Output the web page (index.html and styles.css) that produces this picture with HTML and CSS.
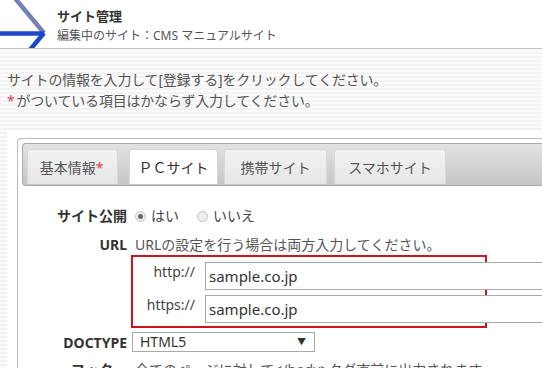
FILE: index.html
```html
<!DOCTYPE html>
<html lang="ja">
<head>
    <meta charset="UTF-8">
    <title>サイト管理</title>
    <link rel="stylesheet" href="styles.css">
</head>
<body>
    <div class="header">
        <svg class="logo" width="50" height="48" viewBox="0 0 50 48">
            <line x1="14" y1="-3" x2="44" y2="33" stroke="#7481b4" stroke-width="4.5"/>
            <line x1="0" y1="33.5" x2="44" y2="33.5" stroke="#1e46c8" stroke-width="4.5"/>
            <line x1="44" y1="33" x2="29" y2="51" stroke="#1e46c8" stroke-width="4.5"/>
        </svg>
        <div class="title-box">
            <div class="title">サイト管理</div>
            <div class="sub">編集中のサイト：CMS マニュアルサイト</div>
        </div>
    </div>

    <div class="intro">
        <p>サイトの情報を入力して[登録する]をクリックしてください。</p>
        <p><span class="req">*</span>がついている項目はかならず入力してください。</p>
    </div>

    <div class="wrap">
        <div class="panel">
            <div class="tabs">
                <div class="tab tab-basic">基本情報<span class="req">*</span></div>
                <div class="tab tab-pc active">ＰＣサイト</div>
                <div class="tab tab-mobile">携帯サイト</div>
                <div class="tab tab-smart">スマホサイト</div>
            </div>

            <div class="form">
                <div class="label">サイト公開</div>
                <div class="field radios">
                    <label><span class="radio checked"></span>はい</label>
                    <label><span class="radio"></span>いいえ</label>
                </div>

                <div class="label">URL</div>
                <div class="field url-field">
                    <div class="note">URLの設定を行う場合は両方入力してください。</div>
                    <div class="url-box">
                        <div class="proto">http://</div>
                        <input class="text" type="text" value="sample.co.jp">
                        <div class="proto">https://</div>
                        <input class="text" type="text" value="sample.co.jp">
                    </div>
                </div>

                <div class="label">DOCTYPE</div>
                <div class="field">
                    <div class="select">HTML5<span class="arrow">▼</span></div>
                </div>

                <div class="label">フッター</div>
                <div class="field note">全てのページに対して&lt;/body&gt;タグ直前に出力されます。</div>
            </div>
        </div>
    </div>
</body>
</html>
```

FILE: styles.css
```css
body {
    margin: 0;
    font-family: "Noto Sans", "Noto Sans CJK JP", sans-serif;
    color: #444;
    font-size: 14px;
    background: repeating-linear-gradient(#f3f3f3 0, #f3f3f3 2px, #fbfbfb 2px, #fbfbfb 4px);
    overflow: hidden;
}
.header {
    display: flex;
    height: 48px;
    background: #fff;
    border-bottom: 1px solid #c4c4c4;
    overflow: hidden;
}
.logo {
    flex: none;
}
.title-box {
    margin-left: 7px;
    padding-top: 6px;
}
.title {
    font-size: 13px;
    font-weight: bold;
    color: #333;
    line-height: 21px;
}
.sub {
    font-size: 12px;
    color: #555;
    line-height: 18px;
}
.intro {
    padding: 20px 7px 0;
    color: #555;
    letter-spacing: -0.2px;
}
.intro p {
    margin: 0;
    line-height: 21px;
}
.req {
    color: #e0404a;
    margin-right: 2px;
}
.wrap {
    margin: 20px 0 0 7px;
    padding: 7px 0 0 10px;
    background: #fff;
}
.panel {
    border: 1px solid #bbb;
    border-right: none;
    border-radius: 4px 0 0 0;
    padding: 4px 0 0 4px;
    background: #fff;
}
.tabs {
    display: flex;
    height: 36px;
    padding: 5px 0 0 4px;
    border: 1px solid #aaa;
    border-right: none;
    border-radius: 4px 0 0 4px;
    background: linear-gradient(#e2e2e2, #c6c6c6);
}
.tab {
    height: 35px;
    line-height: 35px;
    text-align: center;
    border: 1px solid #d8d8d8;
    border-bottom: none;
    border-radius: 4px 4px 0 0;
    background: linear-gradient(#f2f2f2, #e6e6e6);
    color: #555;
    box-sizing: border-box;
}
.tab-basic {
    width: 91px;
}
.tab-pc {
    width: 89px;
    margin-left: 11px;
}
.tab-mobile {
    width: 103px;
    margin-left: 6px;
}
.tab-smart {
    width: 112px;
    margin-left: 7px;
}
.tab.active {
    background: #fff;
    color: #333;
}
.form {
    display: grid;
    grid-template-columns: 105px 1fr;
    column-gap: 8px;
    padding-top: 19px;
}
.label {
    text-align: right;
    font-weight: bold;
    color: #333;
    line-height: 22px;
}
.field {
    line-height: 22px;
    margin-bottom: 7px;
}
.radios {
    display: flex;
    gap: 18px;
}
.radios label {
    display: flex;
    align-items: center;
}
.radio {
    width: 11px;
    height: 11px;
    border: 1px solid #c4c4c4;
    border-radius: 50%;
    background: #eee;
    margin-right: 5px;
    box-sizing: border-box;
    position: relative;
}
.radio.checked::after {
    content: "";
    position: absolute;
    left: 2px;
    top: 2px;
    width: 5px;
    height: 5px;
    border-radius: 50%;
    background: #666;
}
.note {
    color: #555;
}
.url-field {
    margin-bottom: 4px;
}
.url-box {
    display: grid;
    grid-template-columns: 62px 1fr;
    column-gap: 10px;
    row-gap: 5px;
    align-items: center;
    margin: -1px 0 0 -4px;
    padding: 5px 0 3px;
    border: 2px solid #c8161d;
    width: 352px;
}
.proto {
    text-align: right;
    color: #444;
    position: relative;
    top: -4px;
}
.text {
    width: 340px;
    height: 28px;
    box-sizing: border-box;
    border: 1px solid #aaa;
    font: 15px "Noto Sans", "Noto Sans CJK JP", sans-serif;
    color: #333;
    padding: 0 3px;
    background: #fff;
}
.select {
    width: 183px;
    height: 20px;
    box-sizing: border-box;
    border: 1px solid #aaa;
    line-height: 18px;
    padding: 0 7px;
    color: #333;
    position: relative;
    margin-left: -3px;
}
.arrow {
    position: absolute;
    right: 8px;
    top: 0;
    font-size: 9px;
}
```
